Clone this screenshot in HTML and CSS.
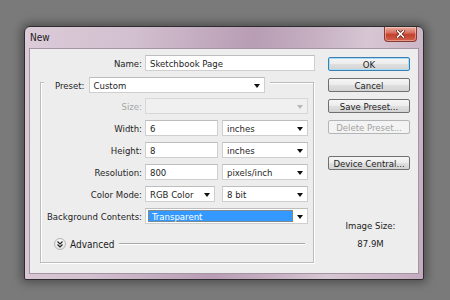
FILE: index.html
```html
<!DOCTYPE html>
<html>
<head>
<meta charset="utf-8">
<link rel="stylesheet" href="styles.css">
</head>
<body>
<div class="window">
  <div class="titlebar">
    <span class="title">New</span>
    <span class="close">
      <svg width="9" height="8" viewBox="0 0 9 8"><path d="M1.5 1 L7.5 7 M7.5 1 L1.5 7" stroke="#5a1a12" stroke-width="3" stroke-linecap="square"/><path d="M1.5 1 L7.5 7 M7.5 1 L1.5 7" stroke="#fff" stroke-width="1.6" stroke-linecap="square"/></svg>
    </span>
  </div>
  <div class="client">
    <div class="main">
      <div class="name-row">
        <span class="lbl">Name:</span>
        <div class="field name-field">Sketchbook Page</div>
      </div>
      <div class="group">
        <div class="legend">
          <span class="legend-lbl">Preset:</span>
          <div class="field select preset">Custom</div>
        </div>
        <div class="rows">
          <div class="row"><span class="lbl lbl-g disabled">Size:</span><div class="field select dis size"></div></div>
          <div class="row"><span class="lbl lbl-g">Width:</span><div class="field num">6</div><div class="field select unit">inches</div></div>
          <div class="row"><span class="lbl lbl-g">Height:</span><div class="field num">8</div><div class="field select unit">inches</div></div>
          <div class="row"><span class="lbl lbl-g">Resolution:</span><div class="field num">800</div><div class="field select unit">pixels/inch</div></div>
          <div class="row"><span class="lbl lbl-g">Color Mode:</span><div class="field select mode">RGB Color</div><div class="field select bits">8 bit</div></div>
          <div class="row"><span class="lbl lbl-g">Background Contents:</span><div class="field select bg"><span class="sel">Transparent</span></div></div>
        </div>
        <div class="adv-row">
          <span class="adv-btn"><svg width="6" height="7" viewBox="0 0 6 7"><path d="M0.5 0.5 L3 3 L5.5 0.5 M0.5 3.5 L3 6 L5.5 3.5" fill="none" stroke="#222" stroke-width="1.2"/></svg></span>
          <span class="adv-txt">Advanced</span>
          <span class="adv-line"></span>
        </div>
      </div>
    </div>
    <div class="side">
      <div class="btn ok">OK</div>
      <div class="btn">Cancel</div>
      <div class="btn">Save Preset...</div>
      <div class="btn dis-btn">Delete Preset...</div>
      <div class="btn device">Device Central...</div>
      <div class="img-lbl">Image Size:</div>
      <div class="img-val">87.9M</div>
    </div>
  </div>
</div>
</body>
</html>
```

FILE: styles.css
```css
* { box-sizing: border-box; margin: 0; padding: 0; }
html, body { width: 450px; height: 300px; overflow: hidden; }
body {
  background: #7a7a7a;
  padding: 26px 24px;
  font-family: "DejaVu Sans Condensed", "DejaVu Sans", sans-serif;
  font-size: 9.5px;
  color: #1e1e1e;
}
.window {
  width: 400px;
  height: 254px;
  border: 1px solid #2e2e2e;
  border-radius: 6px 6px 2px 2px;
  background: linear-gradient(100deg, #dccbd8 0%, #d2bfcf 25%, #b89db4 52%, #c6b0c2 66%, #d7c6d3 78%, #c3abbf 100%);
  padding: 0 4px 5px;
  box-shadow: 0 0 10px 3px rgba(0,0,0,0.35);
  display: flex;
  flex-direction: column;
}
.titlebar {
  height: 21px;
  display: flex;
  align-items: center;
  justify-content: space-between;
  padding-left: 1px;
}
.title { font-size: 10px; color: #1a1a1a; }
.close {
  align-self: flex-start;
  width: 33px;
  height: 15px;
  margin-right: 2px;
  border: 1px solid #8a3b30;
  border-top: none;
  border-radius: 0 0 4px 4px;
  background: linear-gradient(#eab0a4 0%, #d9705f 40%, #c3402d 55%, #d2634f 100%);
  box-shadow: inset 0 0 0 1px rgba(255,220,210,0.45);
  display: flex;
  align-items: center;
  justify-content: center;
}
.client {
  height: 226px;
  background: #ededed;
  border: 1px solid #a595a2;
  display: flex;
  padding: 6px 8px 0 10px;
  gap: 13px;
}
.main { width: 275px; }
.name-row { display: flex; height: 16px; align-items: center; }
.lbl { width: 102px; margin-right: 3px; text-align: right; white-space: nowrap; }
.lbl-g { width: 101px; }
.disabled { color: #a8a8a8; }
.field {
  height: 16px;
  background: #fff;
  border: 1px solid #cfcfcf;
  border-top-color: #bdbdbd;
  padding-left: 4px;
  display: flex;
  align-items: center;
  white-space: nowrap;
  position: relative;
}
.name-field { width: 170px; }
.select::after {
  content: "";
  position: absolute;
  right: 4px;
  top: 6px;
  border-top: 4px solid #111;
  border-left: 3px solid transparent;
  border-right: 3px solid transparent;
}
.group {
  margin-top: 11px;
  width: 274px;
  height: 181px;
  border: 1px solid #bcbcbc;
  box-shadow: inset 1px 1px 0 #fff, 1px 1px 0 #fff;
}
.legend {
  display: flex;
  width: fit-content;
  height: 16px;
  align-items: center;
  margin-top: -6px;
  margin-left: 3px;
  padding: 0 5px 0 11px;
  background: #ededed;
}
.legend-lbl { margin-right: 4px; }
.preset { width: 176px; }
.rows { margin-top: 5px; display: flex; flex-direction: column; gap: 6px; }
.row { display: flex; height: 16px; align-items: center; }
.size { width: 163px; }
.dis { background: #f0f0f0; border-color: #d8d8d8; }
.dis::after { border-top-color: #b8b8b8; }
.num { width: 73px; }
.unit { width: 86px; margin-left: 4px; }
.mode { width: 70px; }
.bits { width: 86px; margin-left: 7px; }
.bg { width: 163px; padding-left: 2px; }
.sel {
  width: 145px;
  height: 12px;
  background: #3399ff;
  border: 1px dotted #c77a2a;
  color: #fff;
  padding-left: 3px;
  display: flex;
  align-items: center;
}
.adv-row {
  margin-top: 14px;
  height: 12px;
  display: flex;
  align-items: center;
  padding-left: 13px;
}
.adv-btn {
  width: 12px;
  height: 12px;
  border-radius: 50%;
  border: 1px solid #b5b5b5;
  background: radial-gradient(circle at 50% 35%, #ffffff, #dedede);
  display: flex;
  align-items: center;
  justify-content: center;
}
.adv-txt { margin-left: 4px; font-size: 10px; }
.adv-line {
  margin-left: 5px;
  width: 186px;
  height: 2px;
  border-top: 1px solid #a9a9a9;
  border-bottom: 1px solid #fff;
}
.side { width: 82px; display: flex; flex-direction: column; gap: 7px; padding-top: 2px; }
.btn {
  height: 14px;
  border: 1px solid #707070;
  border-radius: 2px;
  background: linear-gradient(#f6f6f6 0%, #ececec 48%, #dfdfdf 52%, #d3d3d3 100%);
  display: flex;
  align-items: center;
  justify-content: center;
  white-space: nowrap;
}
.ok { border-color: #3c7fb1; box-shadow: inset 0 0 0 1px #a6dcf7; }
.dis-btn { border-color: #b2b6b9; background: #f3f3f3; color: #a3a3a3; }
.device { margin-top: 15px; }
.img-lbl { margin-top: 43px; text-align: center; height: 11px; line-height: 11px; padding-left: 3px; }
.img-val { margin-top: 0; text-align: center; height: 11px; line-height: 11px; padding-left: 3px; }
```
